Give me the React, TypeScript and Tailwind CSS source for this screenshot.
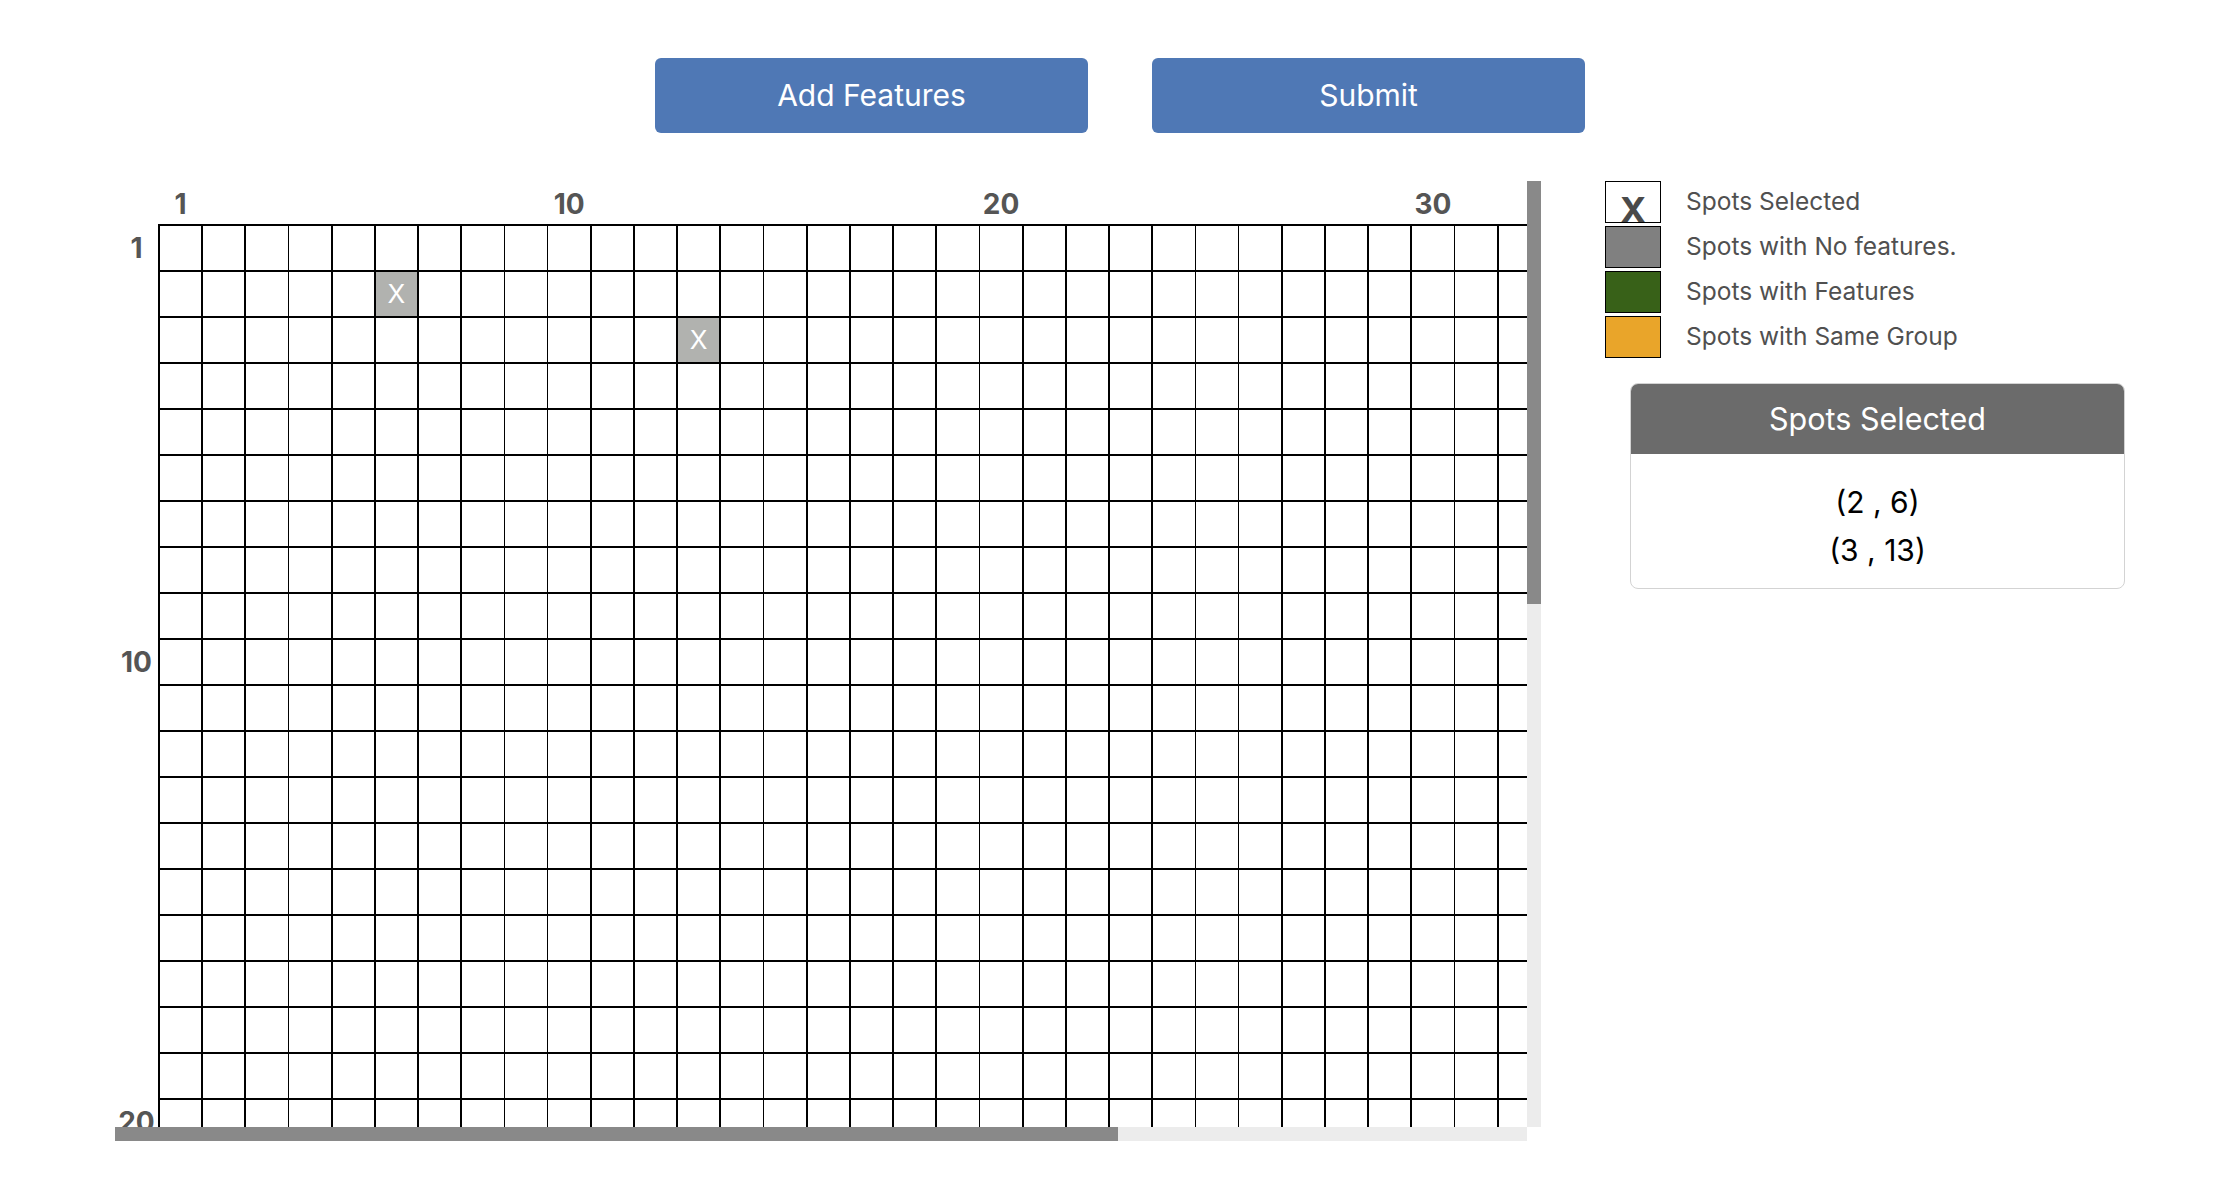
import React from 'react';

const COLS = 45;
const ROWS = 45;
const labelled = new Set([1, 10, 20, 30, 40]);

// spots that are currently selected (row, col), 1-based
const selected = [
  { row: 2, col: 6 },
  { row: 3, col: 13 },
];

const isSelected = (r: number, c: number) => selected.some((s) => s.row === r && s.col === c);

const legend = [
  { label: 'Spots Selected', box: 'bg-white', mark: true },
  { label: 'Spots with No features.', box: 'bg-[#808080]' },
  { label: 'Spots with Features', box: 'bg-[#386118]' },
  { label: 'Spots with Same Group', box: 'bg-[#e9a52a]' },
];

function SpotGrid() {
  const cols = Array.from({ length: COLS }, (_, i) => i + 1);
  const rows = Array.from({ length: ROWS }, (_, i) => i + 1);

  return (
    <div className="grid grid-cols-[1412px_14px] grid-rows-[946px_14px]">
      {/* viewport */}
      <div className="overflow-hidden">
        <div className="w-max">
          {/* column numbers */}
          <div className="flex h-[43px]">
            <div className="w-[43px] shrink-0" />
            <div className="grid grid-cols-[repeat(45,41.4px)] gap-x-[1.8px] px-[1.8px]">
              {cols.map((c) => (
                <div key={c} className="flex items-end justify-center pb-[6px] text-[28px] font-bold leading-none text-[#555]">
                  {labelled.has(c) ? c : ''}
                </div>
              ))}
            </div>
          </div>

          <div className="flex">
            {/* row numbers */}
            <div className="w-[43px] shrink-0 flex flex-col gap-[1.8px] py-[1.8px]">
              {rows.map((r) => (
                <div key={r} className="h-[44.2px] flex items-center justify-center text-[28px] font-bold leading-none text-[#555]">
                  {labelled.has(r) ? r : ''}
                </div>
              ))}
            </div>

            {/* the board */}
            <div className="grid grid-cols-[repeat(45,41.4px)] auto-rows-[44.2px] gap-[1.8px] p-[1.8px] bg-black">
              {rows.map((r) =>
                cols.map((c) =>
                  isSelected(r, c) ? (
                    <div key={`${r}-${c}`} className="bg-[#b1b2af] flex items-center justify-center text-[26px] text-white leading-none">
                      X
                    </div>
                  ) : (
                    <div key={`${r}-${c}`} className="bg-white" />
                  )
                )
              )}
            </div>
          </div>
        </div>
      </div>

      {/* vertical scrollbar */}
      <div className="bg-[#ececec]">
        <div className="h-[423px] bg-[#898989]" />
      </div>

      {/* horizontal scrollbar */}
      <div className="bg-[#ececec]">
        <div className="w-[1003px] h-full bg-[#898989]" />
      </div>
      <div className="bg-white" />
    </div>
  );
}

function Legend() {
  return (
    <div className="flex flex-col gap-[3px]">
      {legend.map((item) => (
        <div key={item.label} className="flex items-center">
          <div className={`w-[56px] h-[42px] border border-black flex items-end justify-center overflow-hidden ${item.box}`}>
            {item.mark && <span className="text-[36px] font-bold leading-none text-[#4a4a4a] mb-[-6px]">X</span>}
          </div>
          <span className="ml-[25px] mb-[2px] text-[24.5px] text-[#505050]">{item.label}</span>
        </div>
      ))}
    </div>
  );
}

function SelectedCard() {
  return (
    <div className="mt-[25px] ml-[25px] w-[495px] rounded-[8px] border border-[#d3d3d3] overflow-hidden">
      <div className="h-[70px] bg-[#6b6b6b] flex items-center justify-center text-[30.5px] text-white">Spots Selected</div>
      <div className="pt-[24px] pb-[14px] flex flex-col items-center text-[30px] leading-[48px] text-black">
        {selected.map((s) => (
          <div key={`${s.row}-${s.col}`}>
            ({s.row} , {s.col})
          </div>
        ))}
      </div>
    </div>
  );
}

export default function App() {
  return (
    <div className="min-h-screen bg-white flex flex-col items-center font-['Inter',sans-serif]">
      <div className="mt-[58px] flex gap-[64px]">
        <button className="w-[433px] h-[75px] rounded-[6px] bg-[#4f78b5] text-white text-[30px]">Add Features</button>
        <button className="w-[433px] h-[75px] rounded-[6px] bg-[#4f78b5] text-white text-[30px]">Submit</button>
      </div>

      <div className="mt-[48px] flex items-start gap-[64px]">
        <SpotGrid />
        <div className="w-[520px]">
          <Legend />
          <SelectedCard />
        </div>
      </div>
    </div>
  );
}
